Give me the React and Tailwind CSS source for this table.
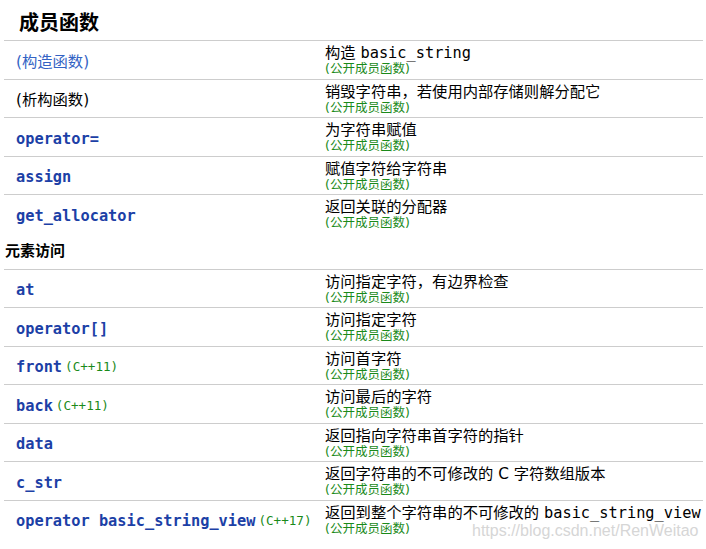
import React from "react";

const SANS = { fontFamily: '"DejaVu Sans", "Noto Sans CJK SC", sans-serif' };

function Code({ children }) {
  return (
    <span className="font-bold text-[15.3px] text-[#1c40a6] [font-family:'DejaVu_Sans_Mono',monospace]">
      {children}
    </span>
  );
}

function Ver({ children }) {
  return (
    <span className="ml-[3px] text-[12.6px] text-[#1a8a1a] [font-family:'DejaVu_Sans_Mono',monospace]">
      {children}
    </span>
  );
}

function Mono({ children }) {
  return <span className="[font-family:'DejaVu_Sans_Mono',monospace] text-[15.3px]">{children}</span>;
}

function Row({ left, desc }) {
  return (
    <div className="flex h-[38.5px] border-t border-[#cdcdcd]">
      <div className="w-[321px] pl-[12px] pt-[5px] flex items-center whitespace-nowrap">{left}</div>
      <div className="flex-1 pt-[3px] whitespace-nowrap">
        <div className="text-[15.3px] leading-[18px] text-black">{desc}</div>
        <div className="text-[12.5px] leading-[14px] text-[#1a8a1a]">(公开成员函数)</div>
      </div>
    </div>
  );
}

export default function App() {
  return (
    <div className="relative w-[706px] h-[549px] bg-white overflow-hidden" style={SANS}>
      <div className="h-[40px] pl-[19px] pt-[9px] text-[20px] leading-[28px] font-bold text-black">成员函数</div>
      <div className="ml-[4px] w-[699px]">
        <Row
          left={<span className="text-[15.3px] text-[#3363c4]">(构造函数)</span>}
          desc={<>构造 <Mono>basic_string</Mono></>}
        />
        <Row
          left={<span className="text-[15.3px] text-black">(析构函数)</span>}
          desc="销毁字符串，若使用内部存储则解分配它"
        />
        <Row left={<Code>operator=</Code>} desc="为字符串赋值" />
        <Row left={<Code>assign</Code>} desc="赋值字符给字符串" />
        <Row left={<Code>get_allocator</Code>} desc="返回关联的分配器" />
        <div className="h-[36px] pl-[1px] pt-[2px] flex items-center text-[15px] font-bold text-black">元素访问</div>
        <Row left={<Code>at</Code>} desc="访问指定字符，有边界检查" />
        <Row left={<Code>operator[]</Code>} desc="访问指定字符" />
        <Row left={<><Code>front</Code><Ver>(C++11)</Ver></>} desc="访问首字符" />
        <Row left={<><Code>back</Code><Ver>(C++11)</Ver></>} desc="访问最后的字符" />
        <Row left={<Code>data</Code>} desc="返回指向字符串首字符的指针" />
        <Row left={<Code>c_str</Code>} desc="返回字符串的不可修改的 C 字符数组版本" />
        <Row
          left={<><Code>operator basic_string_view</Code><Ver>(C++17)</Ver></>}
          desc={<>返回到整个字符串的不可修改的 <Mono>basic_string_view</Mono></>}
        />
      </div>
      <div className="absolute left-[472px] top-[520px] text-[16px] leading-[22px] text-[#d6d6d6] [font-family:'Liberation_Sans',sans-serif] pointer-events-none">
        https://blog.csdn.net/RenWeitao
      </div>
    </div>
  );
}
